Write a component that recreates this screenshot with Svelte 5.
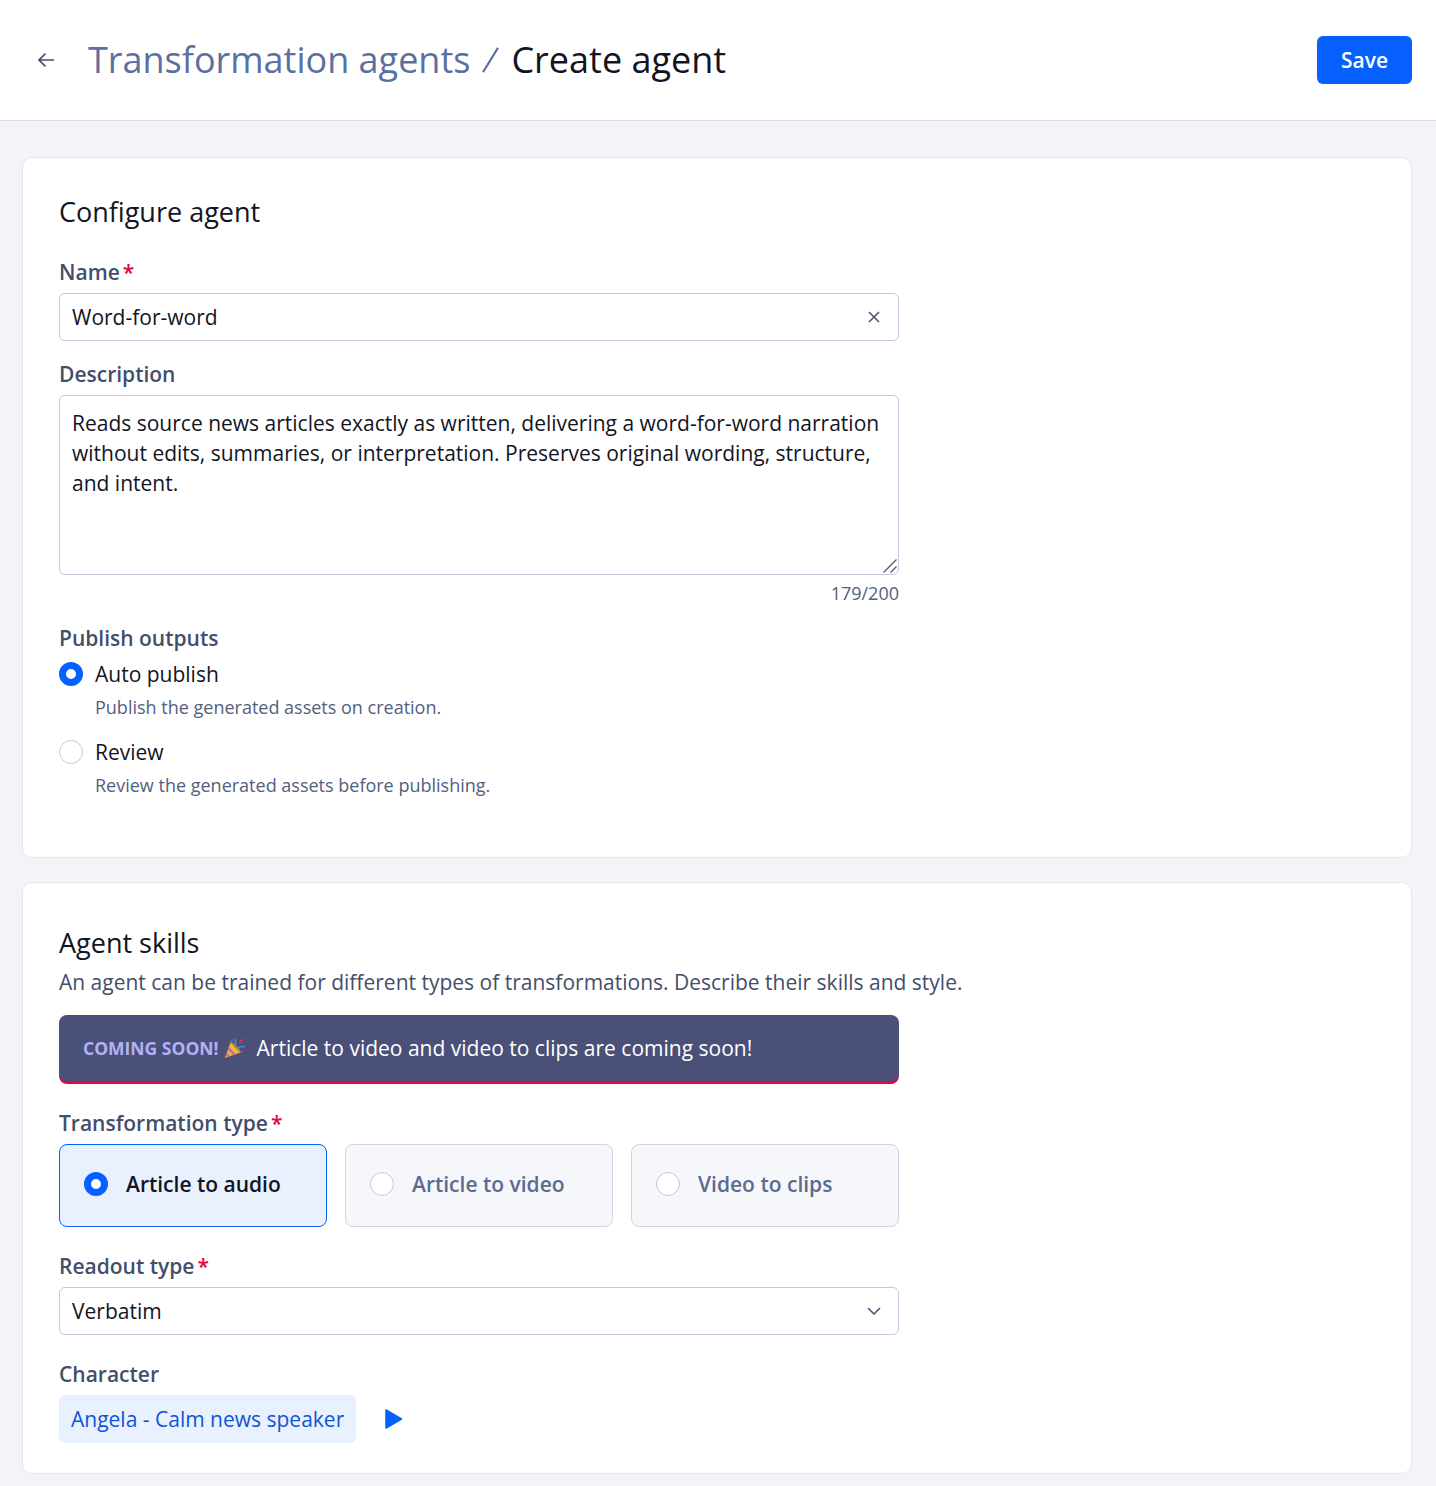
<script>
  const description =
    'Reads source news articles exactly as written, delivering a word-for-word narration without edits, summaries, or interpretation. Preserves original wording, structure, and intent.'

  const outputs = [
    { label: 'Auto publish', hint: 'Publish the generated assets on creation.', checked: true },
    { label: 'Review', hint: 'Review the generated assets before publishing.', checked: false }
  ]

  const types = [
    { label: 'Article to audio', checked: true },
    { label: 'Article to video', checked: false },
    { label: 'Video to clips', checked: false }
  ]
</script>

<header class="topbar">
  <div class="crumbs">
    <svg class="back" viewBox="0 0 16 16" aria-hidden="true">
      <path d="M16 8H1M7.500 1.500 1 8l6.500 6.500" />
    </svg>
    <h1>
      <span class="parent">Transformation agents</span>
      <svg class="slash" viewBox="0 0 18 28" aria-hidden="true"><path d="M1 27 17 1" /></svg>
      <span>Create agent</span>
    </h1>
  </div>
  <button class="save">Save</button>
</header>

<main>
  <section class="card first">
    <h2>Configure agent</h2>

    <div class="label name-label">Name<span class="req">*</span></div>
    <div class="control">
      <span>Word-for-word</span>
      <svg class="icon" viewBox="0 0 12 12" aria-hidden="true"><path d="M1 1l10 10M11 1 1 11" /></svg>
    </div>

    <div class="label desc-label">Description</div>
    <div class="area">
      <textarea readonly value={description}></textarea>
      <svg class="grip" viewBox="0 0 16 16" aria-hidden="true"><path d="M1.500 14.500 14.500 1.500M8.500 14.500l6-6" /></svg>
    </div>
    <div class="count">179/200</div>

    <div class="label out-label">Publish outputs</div>
    {#each outputs as o}
      <div class="opt">
        <span class="radio" class:on={o.checked}></span>
        <span class="opt-label">{o.label}</span>
      </div>
      <div class="hint">{o.hint}</div>
    {/each}
  </section>

  <section class="card second">
    <h2>Agent skills</h2>
    <p class="sub">An agent can be trained for different types of transformations. Describe their skills and style.</p>

    <div class="banner">
      <strong>COMING SOON!</strong>
      <svg class="party" viewBox="0 0 24 24" aria-hidden="true">
        <path d="M7 6 1 23 18 17Z" fill="#f4b22e" />
        <path d="M5.300 11 13 19l-2.700 1-6-6.300Z M3.200 17 6.500 20.900l-2.300.800-1.900-2.100Z" fill="#a66ad0" />
        <path d="M7 6c3.500 1 9 6.500 11 11" fill="none" stroke="#c98a1b" stroke-width="1.500" />
        <path d="M12 9c1-3 1-5 0-7M15 12c3-2 5-2 8-1" fill="none" stroke="#3d8fe0" stroke-width="1.600" />
        <path d="M17 7c1-1 .5-2 1.500-3s2-.5 2.500-1.500" fill="none" stroke="#d1386a" stroke-width="1.500" />
        <circle cx="8.500" cy="3.500" r="1.100" fill="#3d8fe0" />
        <circle cx="20.500" cy="15.500" r="1.100" fill="#d1386a" />
      </svg>
      <span>Article to video and video to clips are coming soon!</span>
    </div>

    <div class="label type-label">Transformation type<span class="req">*</span></div>
    <div class="types">
      {#each types as t}
        <div class="type" class:active={t.checked}>
          <span class="radio" class:on={t.checked}></span>
          <span>{t.label}</span>
        </div>
      {/each}
    </div>

    <div class="label read-label">Readout type<span class="req">*</span></div>
    <div class="control">
      <span>Verbatim</span>
      <svg class="icon chevron" viewBox="0 0 14 8" aria-hidden="true"><path d="M1 1l6 6 6-6" /></svg>
    </div>

    <div class="label char-label">Character</div>
    <div class="character">
      <span class="chip">Angela - Calm news speaker</span>
      <svg class="play" viewBox="0 0 18 20" aria-hidden="true"><path d="M1 1v18L16.500 10Z" stroke="#0560fd" stroke-width="1.500" stroke-linejoin="round" /></svg>
    </div>
  </section>
</main>

<style>
  :global(body) {
    background: #f3f4f8;
    font-family: 'Open Sans', 'Noto Sans', sans-serif;
    color: #12151f;
  }

  .topbar {
    display: flex;
    align-items: center;
    justify-content: space-between;
    height: 120px;
    padding: 0 24px 0 38px;
    background: #fff;
    border-bottom: 1px solid #dadee8;
  }
  .crumbs {
    display: flex;
    align-items: center;
    gap: 34px;
  }
  .back {
    width: 16px;
    height: 16px;
    fill: none;
    stroke: #434e6b;
    stroke-width: 1.700;
  }
  h1 {
    display: flex;
    align-items: center;
    gap: 12px;
    margin: 0;
    font-size: 36px;
    font-weight: 400;
    line-height: 48px;
  }
  .parent {
    color: #5b70a0;
  }
  .slash {
    width: 17px;
    height: 28px;
    fill: none;
    stroke: #5b70a0;
    stroke-width: 2.400;
  }
  .save {
    width: 95px;
    height: 48px;
    border: 0;
    border-radius: 6px;
    background: #0560fd;
    color: #fff;
    font: 600 21px 'Open Sans', sans-serif;
  }

  main {
    display: flex;
    flex-direction: column;
    gap: 24px;
    padding: 36px 24px 12px 22px;
  }
  .card {
    box-sizing: border-box;
    background: #fff;
    border: 1px solid #e3e6ee;
    border-radius: 10px;
    padding: 0 36px;
  }
  .first {
    height: 701px;
    padding-top: 34px;
  }
  .second {
    height: 592px;
    padding-top: 40px;
  }
  h2 {
    margin: 0;
    font-size: 27px;
    font-weight: 400;
    line-height: 40px;
  }
  .label {
    color: #434e6b;
    font-size: 21px;
    font-weight: 600;
    line-height: 30px;
  }
  .req {
    color: #e5063f;
    margin-left: 3px;
  }
  .name-label { margin-top: 25px; }
  .desc-label { margin-top: 18px; }
  .out-label { margin-top: 16px; }
  .type-label { margin-top: 24px; }
  .read-label { margin-top: 24px; }
  .char-label { margin-top: 24px; }

  .control {
    display: flex;
    align-items: center;
    justify-content: space-between;
    box-sizing: border-box;
    width: 840px;
    height: 48px;
    margin-top: 6px;
    padding: 0 18px 0 12px;
    border: 1px solid #c2c9da;
    border-radius: 6px;
    background: #fff;
    font-size: 21px;
  }
  .icon {
    width: 12px;
    height: 12px;
    fill: none;
    stroke: #4a5472;
    stroke-width: 1.600;
  }
  .chevron {
    width: 14px;
    height: 8px;
    margin-right: -1px;
  }
  .area {
    position: relative;
    width: 840px;
    height: 180px;
    margin-top: 6px;
  }
  textarea {
    display: block;
    box-sizing: border-box;
    width: 100%;
    height: 100%;
    padding: 12px 12px;
    border: 1px solid #c2c9da;
    border-radius: 6px;
    outline: none;
    resize: none;
    color: #12151f;
    font: 400 21px/30px 'Open Sans', sans-serif;
  }
  .grip {
    position: absolute;
    right: 1px;
    bottom: 1px;
    width: 16px;
    height: 16px;
    fill: none;
    stroke: #55585f;
    stroke-width: 1.300;
  }
  .count {
    width: 840px;
    margin-top: 4px;
    color: #53607e;
    font-size: 18px;
    line-height: 28px;
    text-align: right;
  }

  .opt {
    display: flex;
    align-items: center;
    gap: 12px;
    height: 36px;
    margin-top: 3px;
    font-size: 21px;
  }
  .hint {
    margin: 2px 0 14px 36px;
    color: #53607e;
    font-size: 18px;
    line-height: 26px;
  }
  .radio {
    flex: none;
    box-sizing: border-box;
    width: 24px;
    height: 24px;
    border: 1px solid #c2c9da;
    border-radius: 50%;
    background: #fff;
  }
  .radio.on {
    border: 7px solid #0560fd;
  }

  .sub {
    margin: 4px 0 0;
    color: #434e6b;
    font-size: 21px;
    line-height: 30px;
  }
  .banner {
    display: flex;
    align-items: center;
    box-sizing: border-box;
    width: 840px;
    height: 69px;
    margin-top: 18px;
    padding: 0 24px;
    border-bottom: 3px solid #e5063f;
    border-radius: 8px;
    background: #4a5078;
    color: #fff;
    font-size: 21px;
  }
  .banner strong {
    color: #b4b0f5;
    font-size: 17.500px;
    font-weight: 700;
  }
  .party {
    width: 22px;
    height: 22px;
    margin: 0 11px 0 5px;
  }
  .types {
    display: grid;
    grid-template-columns: repeat(3, 268px);
    gap: 18px;
    margin-top: 6px;
  }
  .type {
    display: flex;
    align-items: center;
    gap: 18px;
    box-sizing: border-box;
    height: 83px;
    padding: 0 24px 3px;
    border: 1px solid #d0d5e2;
    border-radius: 8px;
    background: #f6f7fa;
    color: #5b6a8f;
    font-size: 21px;
    font-weight: 600;
  }
  .type.active {
    border-color: #0560fd;
    background: #e9f0fe;
    color: #12151f;
  }
  .character {
    display: flex;
    align-items: center;
    gap: 29px;
    margin-top: 6px;
  }
  .chip {
    display: flex;
    align-items: center;
    height: 48px;
    padding: 0 12px;
    border-radius: 6px;
    background: #e9f0fe;
    color: #0b56d8;
    font-size: 21px;
  }
  .play {
    width: 18px;
    height: 20px;
    fill: #0560fd;
  }
</style>
